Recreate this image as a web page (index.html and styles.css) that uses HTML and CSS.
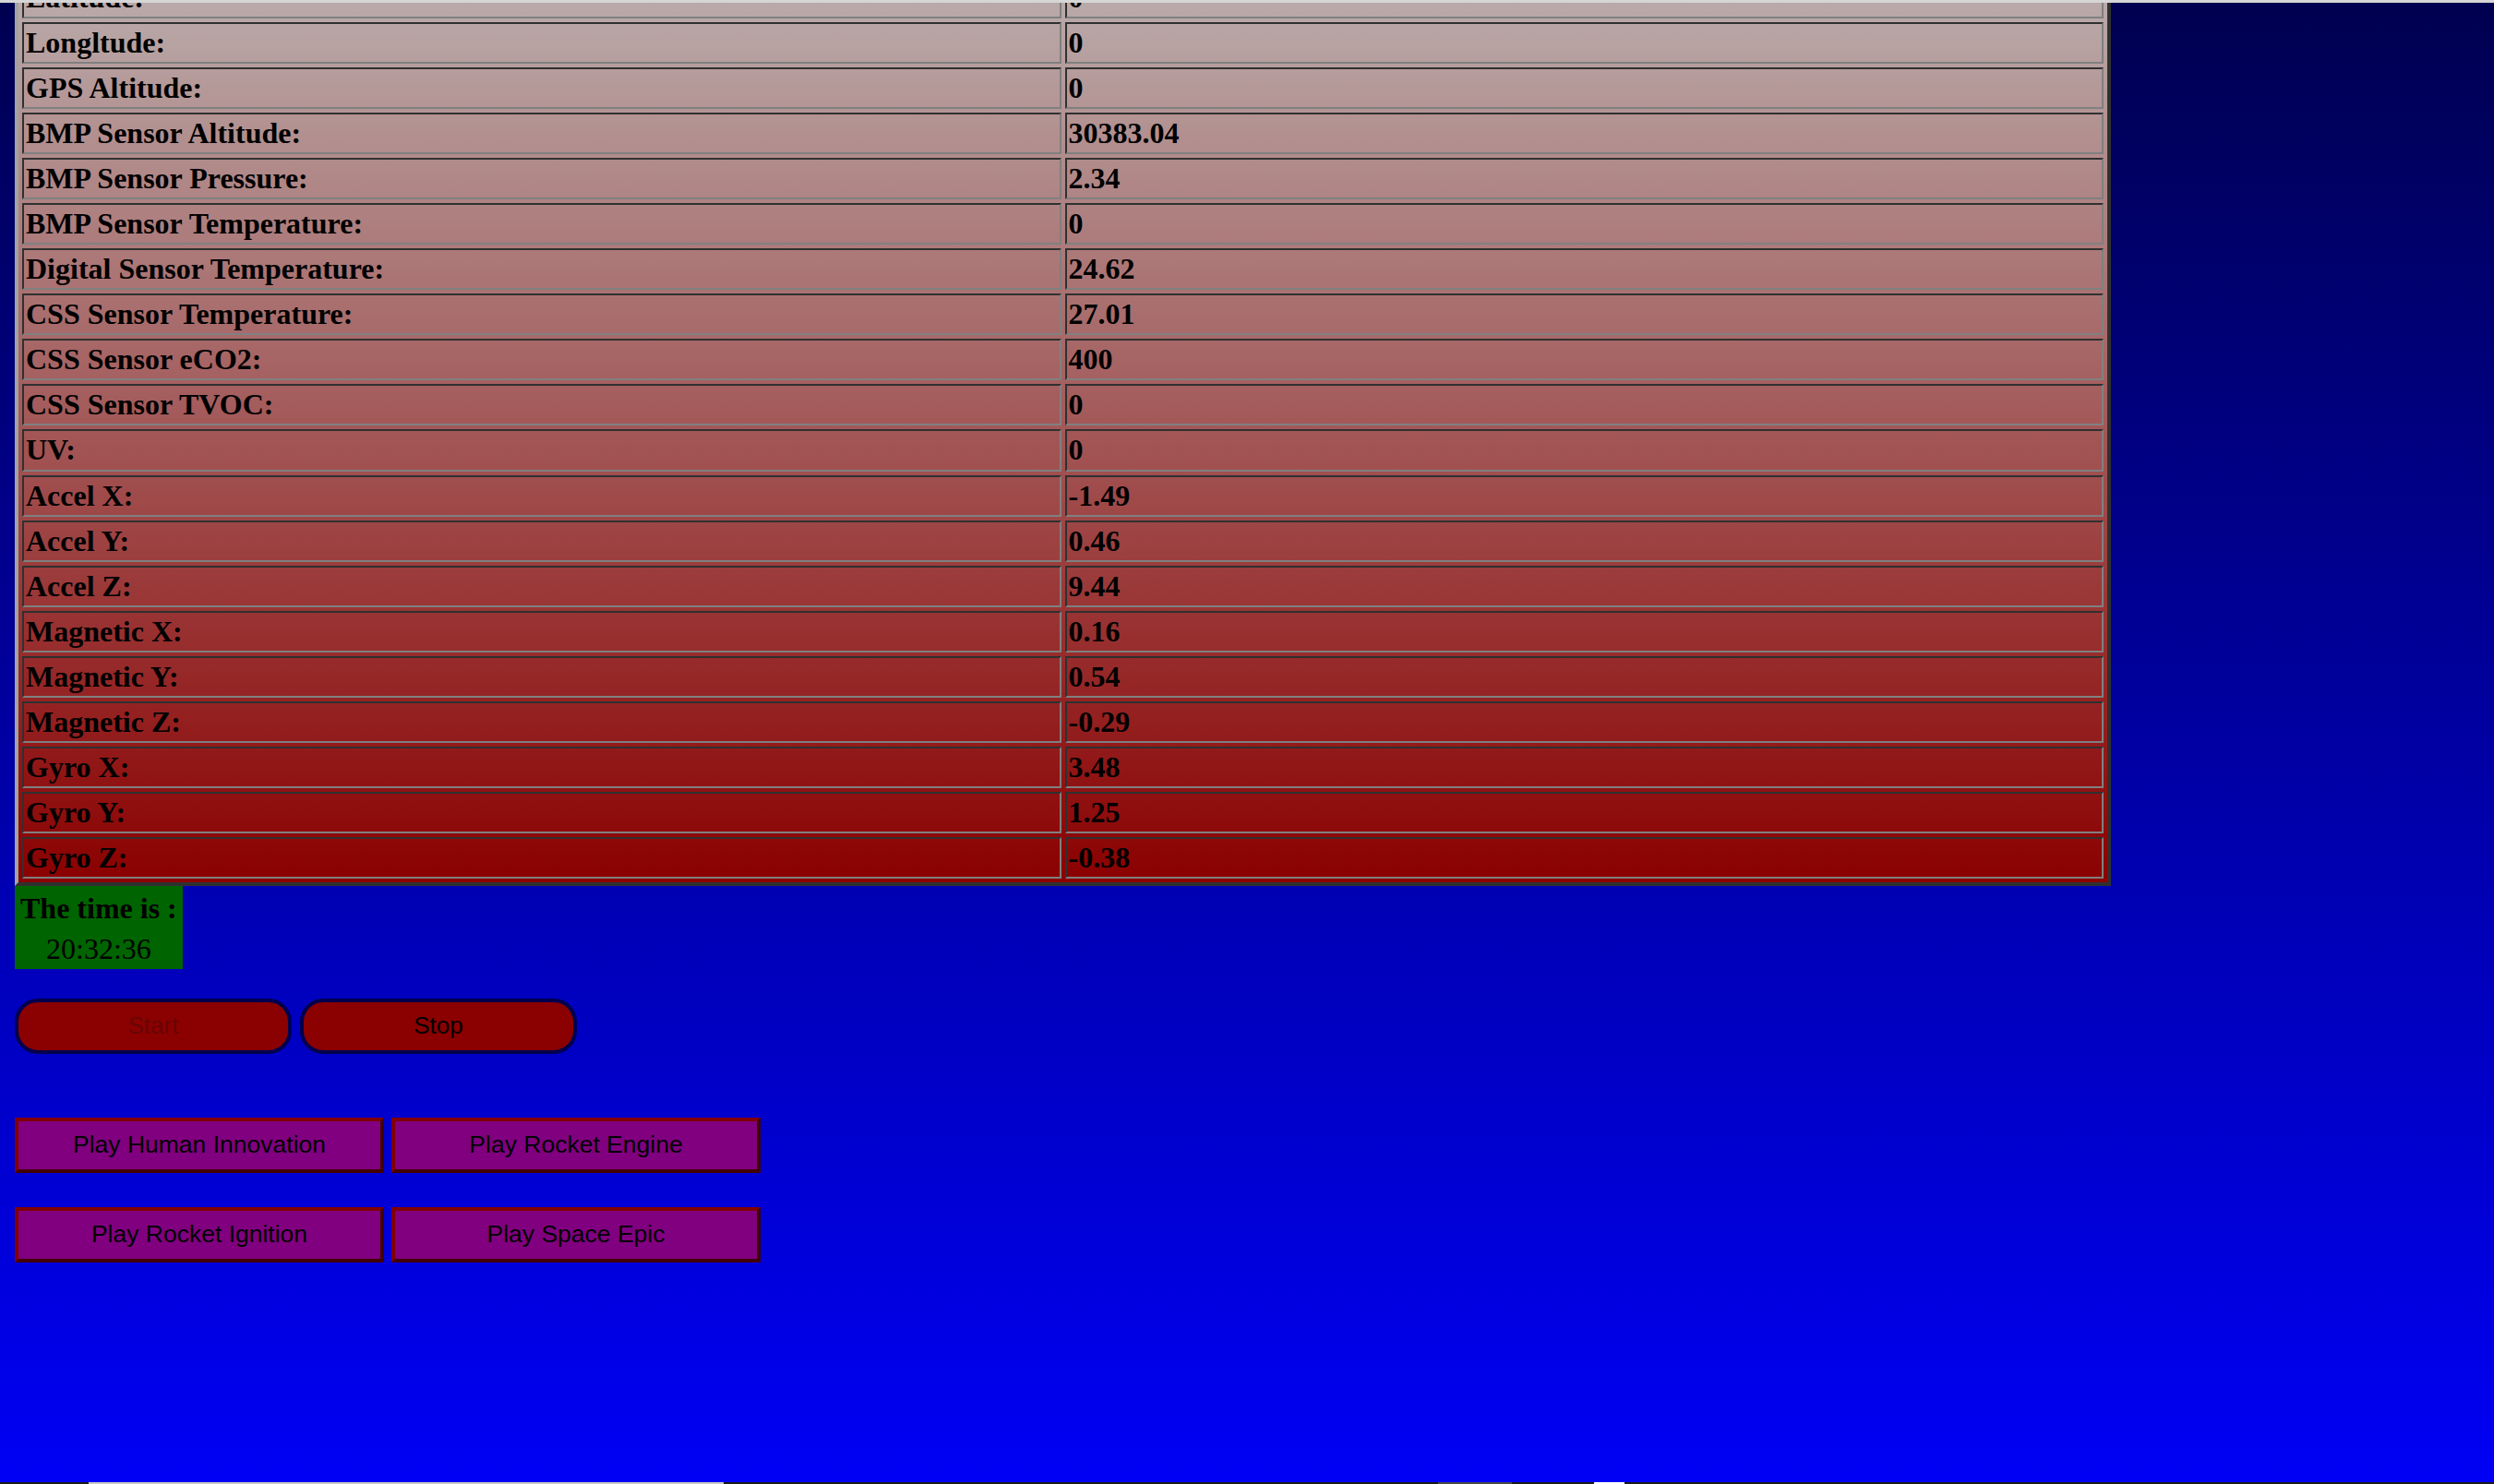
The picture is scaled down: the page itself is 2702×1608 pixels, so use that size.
FILE: index.html
```html
<!DOCTYPE html>
<html lang="en">
<head>
<meta charset="utf-8">
<title>Rocket Telemetry</title>
<link rel="stylesheet" href="styles.css">
</head>
<body>
<div class="topline"></div>
<table class="telemetry">
  <tbody>
    <tr><td>Latitude:</td><td>0</td></tr>
    <tr><td>Longltude:</td><td>0</td></tr>
    <tr><td>GPS Altitude:</td><td>0</td></tr>
    <tr><td>BMP Sensor Altitude:</td><td>30383.04</td></tr>
    <tr><td>BMP Sensor Pressure:</td><td>2.34</td></tr>
    <tr><td>BMP Sensor Temperature:</td><td>0</td></tr>
    <tr><td>Digital Sensor Temperature:</td><td>24.62</td></tr>
    <tr><td>CSS Sensor Temperature:</td><td>27.01</td></tr>
    <tr><td>CSS Sensor eCO2:</td><td>400</td></tr>
    <tr><td>CSS Sensor TVOC:</td><td>0</td></tr>
    <tr><td>UV:</td><td>0</td></tr>
    <tr><td>Accel X:</td><td>-1.49</td></tr>
    <tr><td>Accel Y:</td><td>0.46</td></tr>
    <tr><td>Accel Z:</td><td>9.44</td></tr>
    <tr><td>Magnetic X:</td><td>0.16</td></tr>
    <tr><td>Magnetic Y:</td><td>0.54</td></tr>
    <tr><td>Magnetic Z:</td><td>-0.29</td></tr>
    <tr><td>Gyro X:</td><td>3.48</td></tr>
    <tr><td>Gyro Y:</td><td>1.25</td></tr>
    <tr><td>Gyro Z:</td><td>-0.38</td></tr>
  </tbody>
</table>
<div class="clock">
  <div class="clock-label">The time is :</div>
  <div class="clock-value">20:32:36</div>
</div>
<div class="controls">
  <button class="run" disabled>Start</button>
  <button class="run">Stop</button>
</div>
<div class="sounds">
  <button class="sound">Play Human Innovation</button>
  <button class="sound">Play Rocket Engine</button>
  <button class="sound">Play Rocket Ignition</button>
  <button class="sound">Play Space Epic</button>
</div>
<div class="taskbar"></div>
</body>
</html>
```
FILE: styles.css
```css
html {
  height: 100%;
  background: linear-gradient(to bottom, rgb(0, 0, 80), rgb(0, 0, 245));
}

body {
  margin: 0;
  padding: 0 16px;
  font-family: "Liberation Serif", "Times New Roman", serif;
  font-size: 32px;
  color: #000;
}

.telemetry {
  width: 2271px;
  margin-top: -33px;
  table-layout: fixed;
  border-collapse: separate;
  border-spacing: 4px;
  border: 4px solid;
  border-color: #a3a3a3 #303030 #303030 #a3a3a3;
  background: linear-gradient(to bottom, rgb(187, 175, 175), rgb(139, 0, 0));
}

.telemetry td {
  width: 50%;
  padding: 2px;
  border: 2px solid;
  border-color: #303030 #808080 #808080 #303030;
  font-weight: bold;
  line-height: 37.05px;
  white-space: nowrap;
}

.clock {
  width: fit-content;
  padding: 2px 6px 0;
  background: #006400;
  text-align: center;
  line-height: 44px;
}

.clock-label {
  font-weight: bold;
}

.controls {
  display: flex;
  gap: 9px;
  margin-top: 32px;
}

.run {
  width: 300px;
  height: 60px;
  padding: 0;
  border: 4px solid #00004e;
  border-radius: 25px;
  background: #8b0000;
  color: #000;
  font-family: "Liberation Sans", Arial, sans-serif;
  font-size: 26px;
}

.run:disabled {
  color: rgba(16, 16, 16, 0.3);
}

.sounds {
  display: grid;
  grid-template-columns: 400px 400px;
  column-gap: 8px;
  row-gap: 37px;
  margin-top: 69px;
}

.sound {
  height: 60px;
  padding: 0;
  border: 4px solid;
  border-color: #800000 #400000 #400000 #800000;
  background: #800080;
  color: #000;
  font-family: "Liberation Sans", Arial, sans-serif;
  font-size: 26.5px;
}

.topline {
  position: fixed;
  top: 0;
  left: 0;
  right: 0;
  height: 3px;
  background: #d6d6d6;
  z-index: 2;
}

.taskbar {
  position: fixed;
  left: 0;
  right: 0;
  bottom: 0;
  height: 2px;
  background: linear-gradient(to right,
    #1c1c1c 96px,
    #c8c8c8 96px 784px,
    #1c1c1c 784px 1558px,
    #4a4a4a 1558px 1638px,
    #1c1c1c 1638px 1727px,
    #ffffff 1727px 1760px,
    #1c1c1c 1760px);
}
```
